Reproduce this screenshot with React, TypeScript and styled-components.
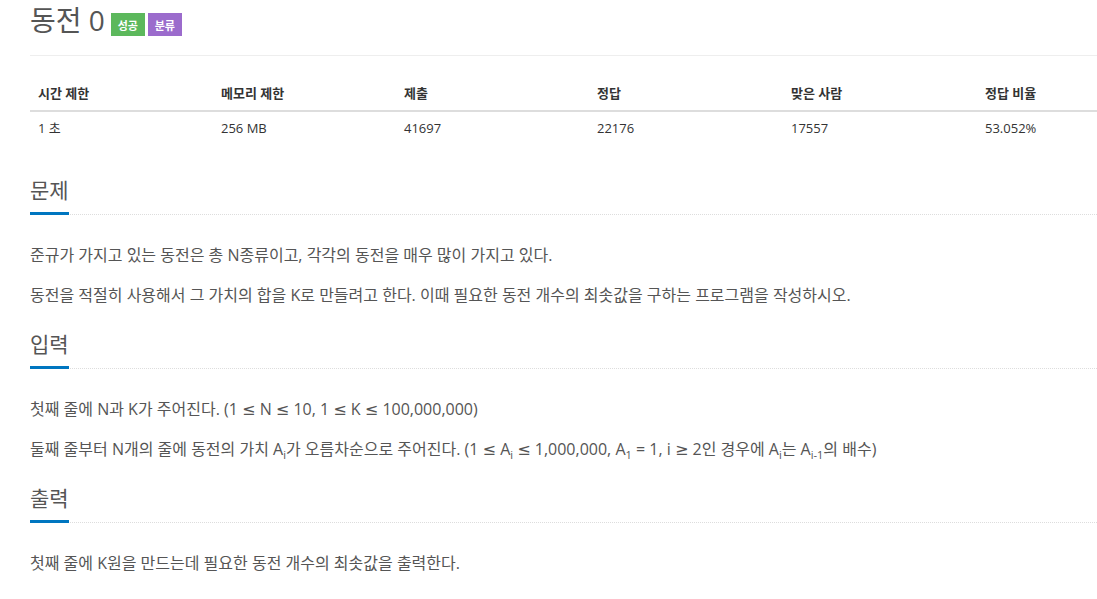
import styled, { createGlobalStyle } from "styled-components";

const GlobalStyle = createGlobalStyle`
  html, body {
    margin: 0;
    padding: 0;
    background: #fff;
  }
  body {
    font-family: "Open Sans", "Noto Sans CJK KR", sans-serif;
    color: #555;
  }
`;

const limits = [
  { label: "시간 제한", value: "1 초", width: 167 },
  { label: "메모리 제한", value: "256 MB", width: 167 },
  { label: "제출", value: "41697", width: 177 },
  { label: "정답", value: "22176", width: 178 },
  { label: "맞은 사람", value: "17557", width: 178 },
  { label: "정답 비율", value: "53.052%", width: 104 },
];

const App = () => {
  return (
    <Page>
      <GlobalStyle />
      <TitleRow>
        <Title>동전 0</Title>
        <Badge $color="#5cb85c">성공</Badge>
        <Badge $color="#9b6bcc">분류</Badge>
      </TitleRow>
      <Divider />

      <InfoTable>
        <thead>
          <tr>
            {limits.map((l) => (
              <HeadCell key={l.label} style={{ width: l.width }}>
                {l.label}
              </HeadCell>
            ))}
          </tr>
        </thead>
        <tbody>
          <tr>
            {limits.map((l) => (
              <BodyCell key={l.label}>{l.value}</BodyCell>
            ))}
          </tr>
        </tbody>
      </InfoTable>

      <Sections>
        <Section>
          <Headline>
            <HeadText>문제</HeadText>
          </Headline>
          <Para>준규가 가지고 있는 동전은 총 N종류이고, 각각의 동전을 매우 많이 가지고 있다.</Para>
          <Para>
            동전을 적절히 사용해서 그 가치의 합을 K로 만들려고 한다. 이때 필요한 동전 개수의
            최솟값을 구하는 프로그램을 작성하시오.
          </Para>
        </Section>

        <Section>
          <Headline>
            <HeadText>입력</HeadText>
          </Headline>
          <Para>
            첫째 줄에 N과 K가 주어진다. (1 <Rel>≤</Rel> N <Rel>≤</Rel> 10, 1 <Rel>≤</Rel> K{" "}
            <Rel>≤</Rel> 100,000,000)
          </Para>
          <Para>
            둘째 줄부터 N개의 줄에 동전의 가치 A<Sub>i</Sub>가 오름차순으로 주어진다. (1{" "}
            <Rel>≤</Rel> A<Sub>i</Sub> <Rel>≤</Rel> 1,000,000, A<Sub>1</Sub> = 1, i{" "}
            <Rel>≥</Rel> 2인 경우에 A<Sub>i</Sub>는 A<Sub>i-1</Sub>의 배수)
          </Para>
        </Section>

        <Section>
          <Headline>
            <HeadText>출력</HeadText>
          </Headline>
          <Para>첫째 줄에 K원을 만드는데 필요한 동전 개수의 최솟값을 출력한다.</Para>
        </Section>
      </Sections>
    </Page>
  );
};

const Page = styled.div`
  padding: 0 0 0 30px;
  width: 1067px;
`;

const TitleRow = styled.div`
  display: flex;
  align-items: flex-start;
  gap: 3px;
  height: 40px;
`;

const Title = styled.h1`
  margin: 0 3px 0 0;
  font-size: 28px;
  font-weight: 400;
  line-height: 40px;
  color: #555;
`;

const Badge = styled.span<{ $color: string }>`
  display: inline-flex;
  align-items: center;
  justify-content: center;
  width: 34px;
  height: 23px;
  margin-top: 13px;
  background: ${({ $color }) => $color};
  color: #fff;
  font-size: 11px;
  font-weight: 700;
`;

const Divider = styled.hr`
  margin: 15px 0 0 0;
  border: 0;
  border-top: 1px solid #eee;
`;

const InfoTable = styled.table`
  margin-top: 19px;
  width: 100%;
  border-collapse: collapse;
  table-layout: fixed;
  font-size: 13px;
`;

const HeadCell = styled.th`
  text-align: left;
  padding: 8px 8px 7px;
  line-height: 20px;
  font-weight: 700;
  color: #333;
  border-bottom: 2px solid #ddd;
`;

const BodyCell = styled.td`
  padding: 6px 8px 8px;
  line-height: 20px;
  color: #333;
`;

const Sections = styled.div`
  margin-top: 29px;
  display: flex;
  flex-direction: column;
  gap: 22px;
`;

const Section = styled.section`
  display: flex;
  flex-direction: column;
  gap: 16px;
`;

const Headline = styled.div`
  border-bottom: 1px dotted #ddd;
  margin-bottom: 12px;
`;

const HeadText = styled.h2`
  display: inline-block;
  margin: 0 0 -1px 0;
  padding-bottom: 7px;
  font-size: 21px;
  font-weight: 400;
  line-height: 30px;
  color: #555;
  border-bottom: 3px solid #0076c0;
`;

const Para = styled.p`
  margin: 0;
  font-size: 16px;
  line-height: 24px;
  height: 24px;
  color: #555;
`;

const Rel = styled.span`
  font-family: "DejaVu Sans", sans-serif;
  font-size: 16px;
  line-height: 1;
`;

const Sub = styled.span`
  position: relative;
  top: 4px;
  font-size: 11px;
  line-height: 1;
`;

export default App;
